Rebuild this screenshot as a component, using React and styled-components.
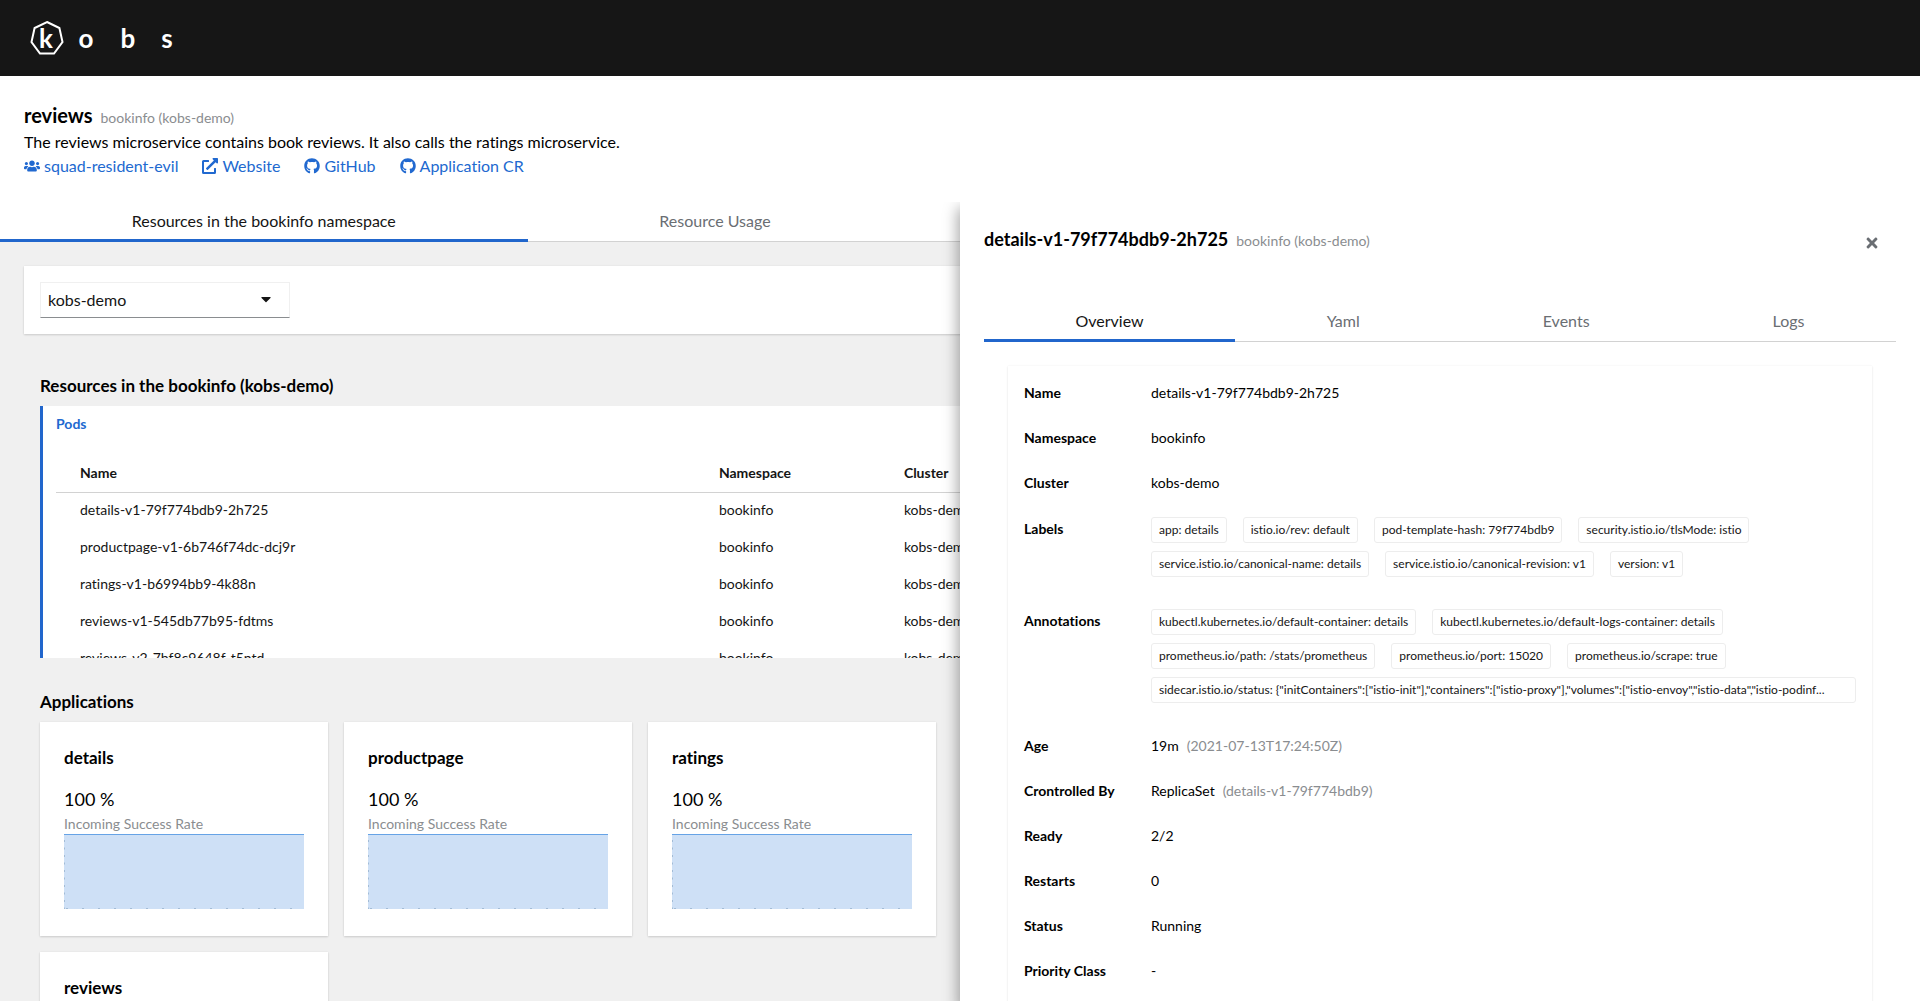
import React, { useState } from "react";
import styled, { createGlobalStyle } from "styled-components";
import { FaCaretDown, FaExternalLinkAlt, FaGithub, FaTimes, FaUsers } from "react-icons/fa";

const GlobalStyle = createGlobalStyle`
    *, *::before, *::after {
        box-sizing: border-box;
    }
    body {
        margin: 0;
        background: #f0f0f0;
        color: #151515;
        font-family: Lato, "Noto Sans", sans-serif;
        font-size: 16px;
        font-variant-ligatures: none;
        line-height: 24px;
    }
    h1, h2, h3, p, dl, dd {
        margin: 0;
    }
    button, select {
        font: inherit;
        color: inherit;
    }
`;

const Page = styled.div`
    display: flex;
    flex-direction: column;
    height: 100vh;
    overflow: hidden;
`;

const Header = styled.header`
    display: flex;
    align-items: center;
    flex: none;
    height: 76px;
    padding: 0 28px;
    background: #161616;
`;

const HomeLink = styled.a`
    display: flex;
`;

const LogoText = styled.text`
    fill: #fff;
    font-size: 26px;
    font-weight: 700;
    text-anchor: middle;
`;

const PageHead = styled.section`
    flex: none;
    padding: 24px;
    background: #fff;
    color: #000;
`;

const TitleRow = styled.div`
    display: flex;
    align-items: baseline;
    gap: 8px;
`;

const PageTitle = styled.h1`
    font-size: 20px;
    font-weight: 700;
    line-height: 30px;
`;

const DrawerTitle = styled.h2`
    font-size: 18px;
    font-weight: 700;
    line-height: 27px;
`;

const Muted = styled.span`
    color: #8a8d90;
    font-size: 14px;
    line-height: 21px;
`;

const LinkList = styled.div`
    display: flex;
    gap: 24px;
`;

const IconLink = styled.a`
    display: inline-flex;
    align-items: center;
    gap: 4px;
    color: #2169d0;
    text-decoration: none;
`;

const Drawer = styled.div`
    position: relative;
    flex: 1;
    min-height: 0;
`;

const TabBar = styled.div`
    background: #fff;
    box-shadow: inset 0 -1px #d2d2d2;
`;

const TabList = styled.div`
    display: flex;
    width: ${(p) => p.$width || "100%"};
`;

const Tab = styled.button`
    flex: 1 1 auto;
    height: 40px;
    padding: 0 16px;
    border: 0;
    border-bottom: 3px solid ${(p) => (p.$active ? "#2166cc" : "transparent")};
    background: none;
    color: ${(p) => (p.$active ? "#151515" : "#6a6e73")};
    cursor: pointer;
`;

const Content = styled.main`
    padding: 24px;
`;

const Toolbar = styled.div`
    padding: 16px;
    background: #fff;
    box-shadow: 0 1px 2px rgba(3, 3, 3, 0.14), 0 0 2px rgba(3, 3, 3, 0.06);
`;

const SelectWrap = styled.div`
    position: relative;
    width: 250px;
    svg {
        position: absolute;
        top: 9px;
        right: 16px;
        pointer-events: none;
    }
`;

const Select = styled.select`
    display: block;
    width: 100%;
    height: 36px;
    padding: 0 7px;
    border: 1px solid #f0f0f0;
    border-bottom-color: #8a8d90;
    border-radius: 0;
    background: #fff;
    appearance: none;
`;

const Group = styled.section`
    padding: ${(p) => p.$top}px 16px 0;
`;

const GroupTitle = styled.h2`
    margin-bottom: 8px;
    color: #000;
    font-size: 17px;
    font-weight: 700;
    line-height: 24px;
`;

const ResourceBox = styled.div`
    height: 252px;
    overflow: hidden;
    padding: 8px 16px 0 13px;
    border-left: 3px solid #2166cc;
    background: #fff;
    font-size: 14px;
    line-height: 20px;
`;

const Kind = styled.h3`
    margin-bottom: 21px;
    color: #2169d0;
    font-size: 14px;
    font-weight: 700;
`;

const Table = styled.table`
    width: 100%;
    table-layout: fixed;
    border-collapse: collapse;
    th, td {
        height: 37px;
        padding: 0 12px 1px;
        text-align: left;
        white-space: nowrap;
    }
    th:first-child, td:first-child {
        width: 36%;
        padding-left: 24px;
    }
    th:nth-child(2) {
        width: 185px;
    }
    thead tr {
        border-bottom: 1px solid #d2d2d2;
    }
`;

const Gallery = styled.div`
    display: grid;
    grid-template-columns: repeat(auto-fill, minmax(256px, 1fr));
    gap: 16px;
    width: calc(50vw - 64px);
`;

const AppCard = styled.article`
    padding: 24px 24px 27px;
    background: #fff;
    color: #000;
    box-shadow: 0 1px 2px rgba(3, 3, 3, 0.14), 0 0 2px rgba(3, 3, 3, 0.06);
    svg {
        display: block;
        width: 100%;
        height: 75px;
    }
`;

const AppName = styled.h3`
    margin-bottom: 16px;
    font-size: 17px;
    font-weight: 700;
    line-height: 24px;
`;

const Rate = styled.div`
    font-size: 18px;
    line-height: 27px;
`;

const RateLabel = styled.div`
    color: #8a8d90;
    font-size: 14px;
    line-height: 21px;
`;

const Panel = styled.aside`
    position: absolute;
    top: 0;
    right: 0;
    bottom: 0;
    width: 50%;
    padding: 24px;
    overflow: hidden;
    background: #fff;
    color: #000;
`;

// the shadow that the panel throws on the content at its left
const PanelShadow = styled.div`
    position: absolute;
    top: 0;
    right: 0;
    bottom: 0;
    width: 50%;
    box-shadow: 0 8px 14px 2px rgba(3, 3, 3, 0.36);
    clip-path: inset(0 0 0 -24px);
`;

const PanelHead = styled.div`
    display: flex;
    align-items: flex-start;
    justify-content: space-between;
    margin-bottom: 42px;
`;

const CloseButton = styled.button`
    display: flex;
    padding: 9px 16px;
    border: 0;
    background: none;
    color: #6a6e73;
    cursor: pointer;
`;

const DetailCard = styled.dl`
    display: grid;
    gap: 24px;
    margin: 24px;
    padding: 16px 16px 48px;
    box-shadow: 0 1px 2px rgba(3, 3, 3, 0.08), 0 0 2px rgba(3, 3, 3, 0.06);
    font-size: 14px;
    line-height: 21px;
`;

const DetailRow = styled.div`
    display: grid;
    grid-template-columns: 111px minmax(0, 1fr);
    column-gap: 16px;
    align-items: baseline;
`;

const Term = styled.dt`
    font-weight: 700;
`;

const Value = styled.dd`
    display: flex;
    gap: 8px;
`;

const Chips = styled.dd`
    display: flex;
    flex-wrap: wrap;
    gap: 8px 16px;
    padding-bottom: 8px;
`;

const Chip = styled.span`
    flex: ${(p) => (p.$wide ? "1 1 100%" : "none")};
    overflow: hidden;
    padding: 0 7px;
    border: 1px solid #ededed;
    border-radius: 3px;
    color: #151515;
    font-size: 12px;
    line-height: 24px;
    white-space: nowrap;
    text-overflow: ellipsis;
`;

const links = [
    { text: "squad-resident-evil", Icon: FaUsers },
    { text: "Website", Icon: FaExternalLinkAlt },
    { text: "GitHub", Icon: FaGithub },
    { text: "Application CR", Icon: FaGithub },
];

const pods = [
    "details-v1-79f774bdb9-2h725",
    "productpage-v1-6b746f74dc-dcj9r",
    "ratings-v1-b6994bb9-4k88n",
    "reviews-v1-545db77b95-fdtms",
    "reviews-v2-7bf8c9648f-t5ntd",
];

const labels = [
    "app: details",
    "istio.io/rev: default",
    "pod-template-hash: 79f774bdb9",
    "security.istio.io/tlsMode: istio",
    "service.istio.io/canonical-name: details",
    "service.istio.io/canonical-revision: v1",
    "version: v1",
];

const annotations = [
    "kubectl.kubernetes.io/default-container: details",
    "kubectl.kubernetes.io/default-logs-container: details",
    "prometheus.io/path: /stats/prometheus",
    "prometheus.io/port: 15020",
    "prometheus.io/scrape: true",
    'sidecar.istio.io/status: {"initContainers":["istio-init"],"containers":["istio-proxy"],"volumes":["istio-envoy","istio-data","istio-podinf...',
];

const details = [
    { term: "Name", value: "details-v1-79f774bdb9-2h725" },
    { term: "Namespace", value: "bookinfo" },
    { term: "Cluster", value: "kobs-demo" },
    { term: "Labels", chips: labels },
    { term: "Annotations", chips: annotations },
    { term: "Age", value: "19m", note: "(2021-07-13T17:24:50Z)" },
    { term: "Crontrolled By", value: "ReplicaSet", note: "(details-v1-79f774bdb9)" },
    { term: "Ready", value: "2/2" },
    { term: "Restarts", value: "0" },
    { term: "Status", value: "Running" },
    { term: "Priority Class", value: "-" },
];

const Logo = () => (
    <svg width="150" height="40" viewBox="0 0 150 40" role="img" aria-label="kobs">
        <path
            d="M19 4L31.4 10L34.5 24L26 35.5H12L3.5 24L6.6 10Z"
            fill="none"
            stroke="#fff"
            strokeWidth="2"
        />
        <LogoText x="18" y="30">k</LogoText>
        <LogoText x="58" y="30">o</LogoText>
        <LogoText x="100" y="30">b</LogoText>
        <LogoText x="139" y="30">s</LogoText>
    </svg>
);

const RateChart = () => (
    <svg viewBox="0 0 240 75" preserveAspectRatio="none" aria-hidden="true">
        <rect width="240" height="75" fill="#cee0f6" />
        <path d="M0.5 6V75" stroke="#a3bcd6" strokeDasharray="2 5.5" />
        <path d="M2 74.5H240" stroke="#a3bcd6" strokeDasharray="2 14" />
        <path d="M0 0.5H240" stroke="#66a3e6" />
    </svg>
);

const Tabs = ({ names, width }) => {
    const [active, setActive] = useState(names[0]);

    return (
        <TabBar>
            <TabList role="tablist" $width={width}>
                {names.map((name) => (
                    <Tab
                        key={name}
                        type="button"
                        role="tab"
                        aria-selected={name === active}
                        $active={name === active}
                        onClick={() => setActive(name)}
                    >
                        {name}
                    </Tab>
                ))}
            </TabList>
        </TabBar>
    );
};

const Resources = () => (
    <Group $top={40}>
        <GroupTitle>Resources in the bookinfo (kobs-demo)</GroupTitle>
        <ResourceBox>
            <Kind>Pods</Kind>
            <Table>
                <thead>
                    <tr>
                        <th>Name</th>
                        <th>Namespace</th>
                        <th>Cluster</th>
                    </tr>
                </thead>
                <tbody>
                    {pods.map((pod) => (
                        <tr key={pod}>
                            <td>{pod}</td>
                            <td>bookinfo</td>
                            <td>kobs-demo</td>
                        </tr>
                    ))}
                </tbody>
            </Table>
        </ResourceBox>
    </Group>
);

const Applications = () => (
    <Group $top={32}>
        <GroupTitle>Applications</GroupTitle>
        <Gallery>
            {["details", "productpage", "ratings", "reviews"].map((name) => (
                <AppCard key={name}>
                    <AppName>{name}</AppName>
                    <Rate>100 %</Rate>
                    <RateLabel>Incoming Success Rate</RateLabel>
                    <RateChart />
                </AppCard>
            ))}
        </Gallery>
    </Group>
);

const PodPanel = ({ onClose }) => (
    <>
        <PanelShadow />
        <Panel>
            <PanelHead>
                <TitleRow>
                    <DrawerTitle>details-v1-79f774bdb9-2h725</DrawerTitle>
                    <Muted>bookinfo (kobs-demo)</Muted>
                </TitleRow>
                <CloseButton type="button" aria-label="Close" onClick={onClose}>
                    <FaTimes size={16} />
                </CloseButton>
            </PanelHead>
            <Tabs names={["Overview", "Yaml", "Events", "Logs"]} />
            <DetailCard>
                {details.map(({ term, value, note, chips }) => (
                    <DetailRow key={term}>
                        <Term>{term}</Term>
                        {chips ? (
                            <Chips>
                                {chips.map((chip) => (
                                    <Chip key={chip} $wide={chip.length > 100}>{chip}</Chip>
                                ))}
                            </Chips>
                        ) : (
                            <Value>
                                {value}
                                {note && <Muted>{note}</Muted>}
                            </Value>
                        )}
                    </DetailRow>
                ))}
            </DetailCard>
        </Panel>
    </>
);

const App = () => {
    const [open, setOpen] = useState(true);

    return (
        <Page>
            <GlobalStyle />
            <Header>
                <HomeLink href="#"><Logo /></HomeLink>
            </Header>
            <PageHead>
                <TitleRow>
                    <PageTitle>reviews</PageTitle>
                    <Muted>bookinfo (kobs-demo)</Muted>
                </TitleRow>
                <p>The reviews microservice contains book reviews. It also calls the ratings microservice.</p>
                <LinkList>
                    {links.map(({ text, Icon }) => (
                        <IconLink key={text} href="#">
                            <Icon size={16} />
                            {text}
                        </IconLink>
                    ))}
                </LinkList>
            </PageHead>
            <Drawer>
                <Tabs names={["Resources in the bookinfo namespace", "Resource Usage"]} width="47%" />
                <Content>
                    <Toolbar>
                        <SelectWrap>
                            <Select aria-label="Cluster" defaultValue="kobs-demo">
                                <option>kobs-demo</option>
                            </Select>
                            <FaCaretDown size={16} />
                        </SelectWrap>
                    </Toolbar>
                    <Resources />
                    <Applications />
                </Content>
                {open && <PodPanel onClose={() => setOpen(false)} />}
            </Drawer>
        </Page>
    );
};

export default App;
